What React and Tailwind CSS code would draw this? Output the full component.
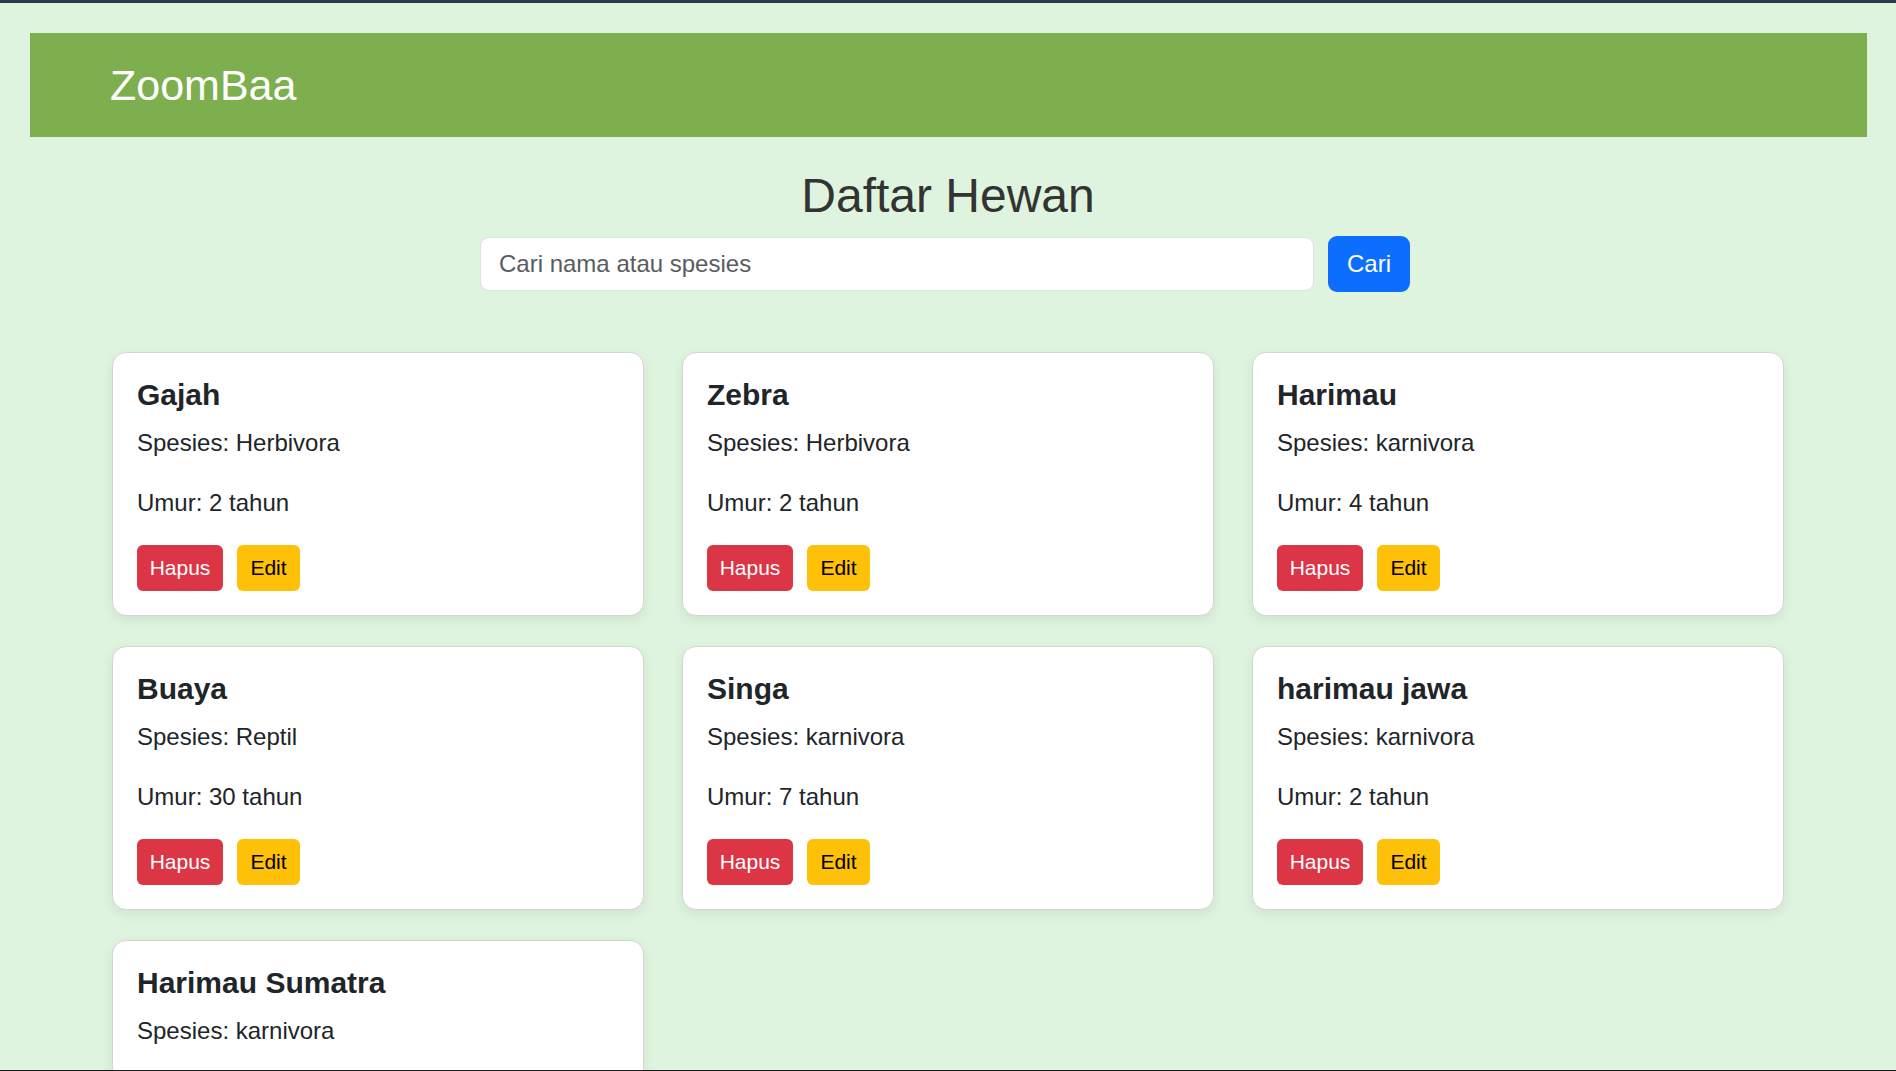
import React from "react";

const animals = [
  { name: "Gajah", species: "Herbivora", age: 2 },
  { name: "Zebra", species: "Herbivora", age: 2 },
  { name: "Harimau", species: "karnivora", age: 4 },
  { name: "Buaya", species: "Reptil", age: 30 },
  { name: "Singa", species: "karnivora", age: 7 },
  { name: "harimau jawa", species: "karnivora", age: 2 },
  { name: "Harimau Sumatra", species: "karnivora", age: 3 },
];

function Card({ a }) {
  return (
    <div className="bg-white border border-[#d3d6d3] rounded-[14px] shadow-[0_4px_12px_rgba(0,0,0,0.08)] p-[24px] text-[#212529]">
      <h5 className="text-[30px] font-bold leading-[36px] mb-[12px]">{a.name}</h5>
      <p className="text-[24px] leading-[36px] mb-[24px]">Spesies: {a.species}</p>
      <p className="text-[24px] leading-[36px] mb-[24px]">Umur: {a.age} tahun</p>
      <div className="flex gap-[14px]">
        <button className="w-[86px] h-[46px] rounded-[6px] bg-[#dc3545] text-white text-[21px] leading-none">
          Hapus
        </button>
        <button className="w-[63px] h-[46px] rounded-[6px] bg-[#ffc107] text-black text-[21px] leading-none">
          Edit
        </button>
      </div>
    </div>
  );
}

export default function App() {
  return (
    <div className="min-h-screen bg-[#dff4df] font-['Liberation_Sans',Arial,sans-serif] pb-[40px]">
      <div className="h-[3px] bg-[#2f3a4a]" />
      <div className="pt-[30px] pl-[30px] pr-[29px]">
        <header className="h-[104px] bg-[#7eaf4e] flex items-center pl-[80px]">
          <span className="text-[43px] text-white leading-none">ZoomBaa</span>
        </header>
      </div>
      <main>
        <h2 className="mt-[30px] mb-[11px] text-center text-[48px] leading-[1.2] text-[#333333]">
          Daftar Hewan
        </h2>
        <form
          className="flex justify-center items-center gap-[14px] pr-[6px]"
          onSubmit={(e) => e.preventDefault()}
        >
          <input
            type="text"
            placeholder="Cari nama atau spesies"
            className="w-[834px] h-[54px] bg-white border border-[#dee2e6] rounded-[9px] px-[18px] text-[24px] text-[#212529] placeholder:text-[#595c5f] outline-none"
          />
          <button
            type="submit"
            className="w-[82px] h-[56px] rounded-[9px] bg-[#0d6efd] text-white text-[24px] leading-none"
          >
            Cari
          </button>
        </form>
        <div className="w-[1672px] mx-auto mt-[60px] grid grid-cols-3 gap-x-[38px] gap-y-[30px]">
          {animals.map((a) => (
            <Card key={a.name} a={a} />
          ))}
        </div>
      </main>
      <div className="fixed left-0 right-0 bottom-0 h-px bg-[#1a1a1a]" />
    </div>
  );
}
